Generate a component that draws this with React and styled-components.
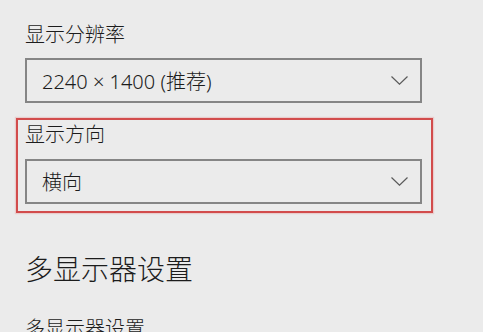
import React from "react";
import styled, { createGlobalStyle } from "styled-components";

const Global = createGlobalStyle`
  html, body { margin: 0; padding: 0; background: #ebebeb; }
  body { font-family: "Noto Sans", "Noto Sans CJK SC", sans-serif; color: #1c1c1c; }
`;

const Page = styled.div`
  width: 483px;
  height: 332px;
  overflow: hidden;
  padding: 21px 61px 0 25px;
  box-sizing: border-box;
  display: flex;
  flex-direction: column;
`;

const Field = styled.div`
  display: flex;
  flex-direction: column;
  gap: ${(p) => p.$gap}px;
`;

const Label = styled.div`
  font-size: 20px;
  line-height: 28px;
  font-weight: 300;
  color: #1c1c1c;
`;

const Highlight = styled.div`
  margin: 15px -11px 0 -9px;
  padding: 1px 9px 7px 7px;
  border: 2px solid #d24c4c;
  box-shadow: 0 0 1px 1px rgba(230, 150, 150, 0.35);
`;

const Select = styled.div`
  height: 45px;
  box-sizing: border-box;
  border: 2px solid #858585;
  display: flex;
  align-items: center;
  justify-content: space-between;
  padding: 0 12px 0 15px;
  font-size: 20px;
  font-weight: 300;
  color: #1c1c1c;
`;

const Chevron = styled.svg`
  width: 17px;
  height: 9px;
  display: block;
`;

const Heading = styled.h2`
  margin: 38px 0 0;
  font-size: 28px;
  line-height: 36px;
  font-weight: 300;
  color: #1c1c1c;
`;

const SubLabel = styled(Label)`
  margin-top: 28px;
`;

const Arrow = () => (
  <Chevron viewBox="0 0 17 9">
    <path d="M0.5 0.5 L8.5 8.2 L16.5 0.5" fill="none" stroke="#5a5a5a" strokeWidth="1.2" />
  </Chevron>
);

export default function App() {
  return (
    <>
      <Global />
      <Page>
        <Field $gap={9}>
          <Label>显示分辨率</Label>
          <Select>
            <span>2240 × 1400 (推荐)</span>
            <Arrow />
          </Select>
        </Field>
        <Highlight>
          <Field $gap={10}>
            <Label>显示方向</Label>
            <Select>
              <span>横向</span>
              <Arrow />
            </Select>
          </Field>
        </Highlight>
        <Heading>多显示器设置</Heading>
        <SubLabel>多显示器设置</SubLabel>
      </Page>
    </>
  );
}
